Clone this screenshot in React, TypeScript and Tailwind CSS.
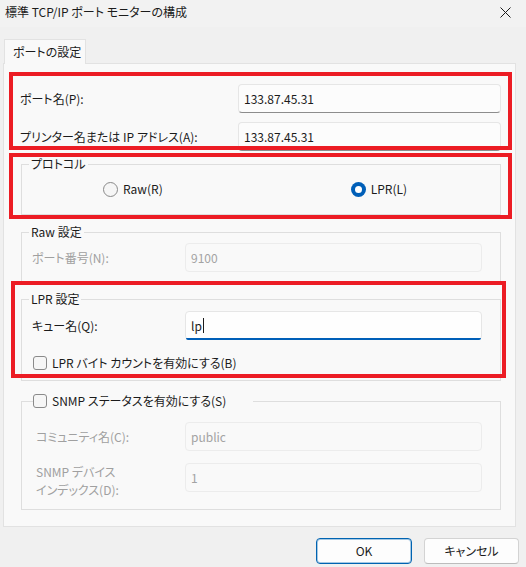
import React from 'react';

const font = { fontFamily: '"Noto Sans CJK JP", "Noto Sans", sans-serif' };

const Input: React.FC<{ value: string; disabled?: boolean; w: string }> = ({ value, disabled, w }) => (
  <div
    className={
      'h-[29px] rounded-[4px] border flex items-center pl-[5px] text-[12px] ' +
      w +
      (disabled
        ? ' bg-[#f9f9f9] border-[#ececec] text-[#a3a3a3]'
        : ' bg-[#fcfcfc] border-[#e6e6e6] border-b-[#8c8c8c] text-[#1b1b1b]')
    }
  >
    {value}
  </div>
);

const Checkbox: React.FC = () => (
  <span className="w-[14px] h-[14px] rounded-[3px] border border-[#8a8a8a] bg-[#f6f6f6] shrink-0" />
);

const Radio: React.FC<{ checked?: boolean; label: string }> = ({ checked, label }) => (
  <label className="flex items-center gap-[5px] h-[16px]">
    {checked ? (
      <span className="w-[15px] h-[15px] rounded-full bg-[#005fb8] flex items-center justify-center">
        <span className="w-[7px] h-[7px] rounded-full bg-white" />
      </span>
    ) : (
      <span className="w-[15px] h-[15px] rounded-full border border-[#8a8a8a] bg-[#f6f6f6]" />
    )}
    <span className="text-[12px] text-[#1b1b1b]">{label}</span>
  </label>
);

export default function App() {
  return (
    <div
      className="w-[526px] h-[567px] bg-[#f0f0f0] overflow-hidden select-none [font-feature-settings:'palt']"
      style={font}
    >
      {/* title bar */}
      <div className="h-[27px] flex items-center justify-between pl-[5px] pr-[15px] pb-[3px] bg-[#f2f2f2]">
        <span className="text-[12px] text-[#1b1b1b]">標準 TCP/IP ポート モニターの構成</span>
        <svg width="11" height="11" viewBox="0 0 11 11">
          <path d="M0.5 0.5 L10.5 10.5 M10.5 0.5 L0.5 10.5" stroke="#1b1b1b" strokeWidth="1" />
        </svg>
      </div>

      {/* tab */}
      <div className="mt-[12px] ml-[4px] flex">
        <div className="relative z-10 -mb-px h-[25px] w-[82px] bg-[#f9f9f9] border border-b-0 border-[#e2e2e2] flex items-center pl-[8px] text-[12px] text-[#1b1b1b]">
          ポートの設定
        </div>
      </div>

      {/* panel */}
      <div className="relative ml-[3px] w-[513px] h-[464px] bg-[#f9f9f9] border border-[#e2e2e2]">
        {/* port / address rows */}
        <div className="pt-[20px] flex flex-col gap-[9px]">
          <div className="flex items-center">
            <span className="pl-[16px] w-[234px] text-[12px] text-[#1b1b1b]">ポート名(P):</span>
            <Input value="133.87.45.31" w="w-[263px]" />
          </div>
          <div className="flex items-center">
            <span className="pl-[16px] w-[234px] text-[12px] text-[#1b1b1b]">プリンター名または IP アドレス(A):</span>
            <Input value="133.87.45.31" w="w-[263px]" />
          </div>
        </div>

        {/* protocol */}
        <fieldset className="mt-[5px] ml-[17px] w-[480px] border border-[#dedede] pt-[9px] pb-[17px]">
          <legend className="ml-[7px] px-[2px] text-[12px] leading-[16px] text-[#1b1b1b]">プロトコル</legend>
          <div className="flex">
            <div className="ml-[81px]">
              <Radio label="Raw(R)" />
            </div>
            <div className="ml-[188px]">
              <Radio checked label="LPR(L)" />
            </div>
          </div>
        </fieldset>

        {/* raw settings */}
        <fieldset className="mt-[9px] ml-[17px] w-[480px] border border-[#dedede] pt-[3px] pb-[11px]">
          <legend className="ml-[7px] px-[2px] text-[12px] leading-[16px] text-[#1b1b1b]">Raw 設定</legend>
          <div className="flex items-center">
            <span className="pl-[10px] w-[163px] text-[12px] text-[#a0a0a0]">ポート番号(N):</span>
            <Input value="9100" disabled w="w-[297px]" />
          </div>
        </fieldset>

        {/* lpr settings */}
        <fieldset className="mt-[7px] ml-[17px] w-[480px] border border-[#dedede] pt-[4px] pb-[9px]">
          <legend className="ml-[7px] px-[2px] text-[12px] leading-[16px] text-[#1b1b1b]">LPR 設定</legend>
          <div className="flex items-center">
            <span className="pl-[10px] w-[163px] text-[12px] text-[#1b1b1b]">キュー名(Q):</span>
            <div className="relative w-[297px] h-[29px] rounded-[4px] border border-[#e6e6e6] bg-[#fefefe] flex items-center pl-[5px] text-[12px] text-[#1b1b1b]">
              <span>lp</span>
              <span className="w-px h-[15px] bg-[#1b1b1b] ml-px" />
              <span className="absolute left-0 right-0 -bottom-px h-[2px] bg-[#005fb8] rounded-b-[4px]" />
            </div>
          </div>
          <div className="mt-[15px] pl-[11px] flex items-center gap-[5px] h-[16px]">
            <Checkbox />
            <span className="text-[12px] text-[#1b1b1b]">LPR バイト カウントを有効にする(B)</span>
          </div>
        </fieldset>

        {/* snmp */}
        <fieldset className="mt-[12px] ml-[17px] w-[480px] border border-[#dedede] pt-[13px] pb-[10px]">
          <legend className="ml-[11px] pr-[27px] flex items-center gap-[5px] h-[16px]">
            <Checkbox />
            <span className="text-[12px] text-[#1b1b1b]">SNMP ステータスを有効にする(S)</span>
          </legend>
          <div className="flex flex-col gap-[12px]">
            <div className="flex items-center">
              <span className="pl-[14px] w-[163px] text-[12px] text-[#a0a0a0]">コミュニティ名(C):</span>
              <Input value="public" disabled w="w-[297px]" />
            </div>
            <div className="flex items-start">
              <span className="pl-[14px] w-[163px] text-[12px] leading-[18px] text-[#a0a0a0]">
                SNMP デバイス
                <br />
                インデックス(D):
              </span>
              <Input value="1" disabled w="w-[297px]" />
            </div>
          </div>
        </fieldset>

        {/* annotation boxes */}
        <div className="absolute left-[5px] top-[8px] w-[503px] h-[78px] border-[4px] border-[#ec1c24] pointer-events-none" />
        <div className="absolute left-[5px] top-[89px] w-[503px] h-[66px] border-[4px] border-[#ec1c24] pointer-events-none" />
        <div className="absolute left-[7px] top-[217px] w-[495px] h-[97px] border-[4px] border-[#ec1c24] pointer-events-none" />
      </div>

      {/* buttons */}
      <div className="mt-[11px] flex justify-end gap-[12px] pr-[7px]">
        <button className="w-[96px] h-[26px] rounded-[4px] bg-[#fdfdfd] border border-[#0063b1] shadow-[inset_0_0_0_1px_rgba(0,99,177,0.35)] text-[12px] text-[#1b1b1b]">
          OK
        </button>
        <button className="w-[95px] h-[26px] rounded-[4px] bg-[#fdfdfd] border border-[#d3d3d3] border-b-[#bcbcbc] text-[12px] text-[#1b1b1b]">
          キャンセル
        </button>
      </div>
    </div>
  );
}
